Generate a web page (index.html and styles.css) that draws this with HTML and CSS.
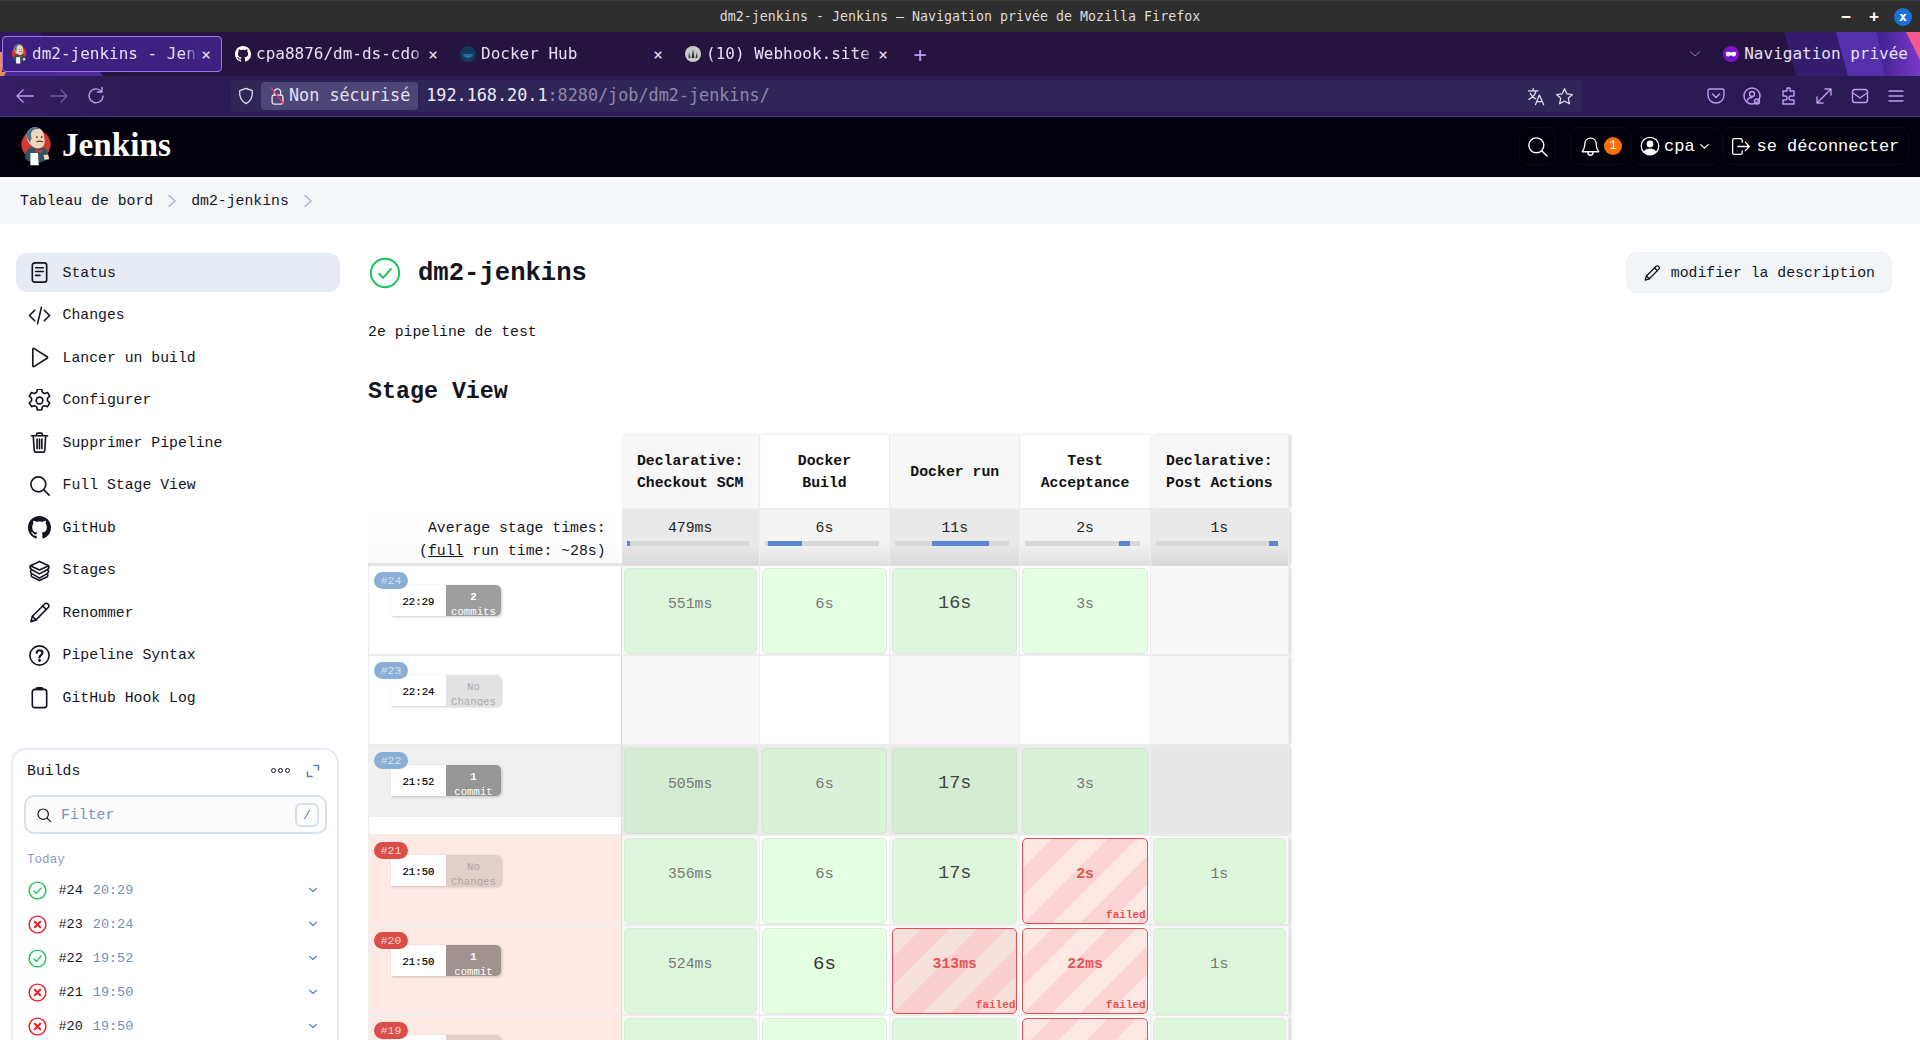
FILE: index.html
```html
<!DOCTYPE html>
<html lang="fr">
<head>
    <meta charset="UTF-8">
    <title>dm2-jenkins - Jenkins</title>
    <link rel="stylesheet" href="styles.css">
</head>
<body>

    <svg class="defs" width="0" height="0">
        <symbol id="i-github" viewBox="0 0 16 16"><path fill="currentColor" stroke="none" d="M8 0C3.58 0 0 3.58 0 8c0 3.54 2.29 6.53 5.47 7.59.4.07.55-.17.55-.38 0-.19-.01-.82-.01-1.49-2.01.37-2.53-.49-2.69-.94-.09-.23-.48-.94-.82-1.13-.28-.15-.68-.52-.01-.53.63-.01 1.08.58 1.23.82.72 1.21 1.87.87 2.33.66.07-.52.28-.87.51-1.07-1.78-.2-3.64-.89-3.64-3.95 0-.87.31-1.59.82-2.15-.08-.2-.36-1.02.08-2.12 0 0 .67-.21 2.2.82.64-.18 1.32-.27 2-.27.68 0 1.36.09 2 .27 1.53-1.04 2.2-.82 2.2-.82.44 1.1.16 1.92.08 2.12.51.56.82 1.27.82 2.15 0 3.07-1.87 3.75-3.65 3.95.29.25.54.73.54 1.48 0 1.07-.01 1.93-.01 2.2 0 .21.15.46.55.38A8.013 8.013 0 0016 8c0-4.42-3.58-8-8-8z"/></symbol>
        <symbol id="i-search" viewBox="0 0 24 24"><circle cx="10.8" cy="10.8" r="7.8"/><path d="M16.6 16.6 22 22"/></symbol>
        <symbol id="i-pencil" viewBox="0 0 24 24"><path d="M3 21.5l1.6-5.6L17.4 3.1a2.3 2.3 0 0 1 3.3 0l.4.4a2.3 2.3 0 0 1 0 3.3L8.4 19.7z"/><path d="M15.4 5.2l3.5 3.5M4.6 15.9l3.8 3.8"/></symbol>
        <symbol id="i-ok" viewBox="0 0 24 24"><circle cx="12" cy="12" r="10.6"/><path d="M7.6 12.6l3 3 5.8-6.6"/></symbol>
        <symbol id="i-ko" viewBox="0 0 24 24"><circle cx="12" cy="12" r="10.6"/><path d="M8.6 8.6l6.8 6.8M15.4 8.6l-6.8 6.8" stroke-width="2.6"/></symbol>
        <symbol id="i-chev" viewBox="0 0 24 24"><path d="M5 8.5l7 6.5 7-6.5"/></symbol>
        <symbol id="i-jenkins" viewBox="0 0 34 42">
            <circle cx="17" cy="19" r="15.5" fill="#d33833"/>
            <path d="M5 31c1-6 5-10 10-10l9 1c4 1 6 4 6 7l-1 5c-3 3-6 4-10 4l-9-1c-3-1-5-3-5-6z" fill="#335061"/>
            <path d="M7 8c1-5 5-7.500 9-7.500 6 0 9 4 9.500 9 .4 3 1 5 .5 8-.5 3-3 5-6 5.500-3 .4-6-1-8-3-3-3-6-7-5-12z" fill="#f0d6b7"/>
            <path d="M7 8c1-5 5-7.500 9-7.500 3 0 5 1 6.500 2.500-4-1-8-.5-10 2-1 2-1 5 0 8-2 1-2 3-.5 5-3-3-6-7-5-10z" fill="#49728b"/>
            <path d="M16 24l4 1.500 4-1.500-.5 4-3.500-1-3.500 1z" fill="#d33833"/>
            <path d="M11 28l8 0 1 13-9 0z" fill="#fff"/>
            <path d="M25 30l5-.5 1 5-5 .5z" fill="#f0d6b7"/>
            <path d="M18 16c1.500-.8 4-.8 6 0" fill="none" stroke="#49443f" stroke-width="1.200"/>
            <circle cx="18" cy="11" r="1" fill="#333"/><circle cx="23" cy="11" r="1" fill="#333"/>
        </symbol>
    </svg>

    <div class="titlebar">
        <span>dm2-jenkins - Jenkins — Navigation privée de Mozilla Firefox</span>
        <div class="win-buttons">
            <span class="win-btn">−</span>
            <span class="win-btn">+</span>
            <span class="win-close">x</span>
        </div>
    </div>

    <div class="firefox">
        <svg class="theme-art art-left" width="110" height="44" viewBox="0 0 110 44">
            <path d="M0 0h40l26 40H0z" fill="#2f1c60"/>
            <path d="M0 40h100l3 4H0z" fill="#4a2a96"/>
            <path d="M0 20h2v20H0zM0 40h6l-2 4H0z" fill="#f08a5d"/>
        </svg>
        <svg class="theme-art art-right" width="140" height="44" viewBox="0 0 140 44">
            <defs>
                <linearGradient id="art-fade" x1="0" x2="1" y1="0" y2="0">
                    <stop offset="0" stop-color="#3d2290"/>
                    <stop offset="1" stop-color="#7a38c8"/>
                </linearGradient>
            </defs>
            <path d="M4 0L16 44H140V0z" fill="#331c6e"/>
            <path d="M97 0L105 44H140V0z" fill="url(#art-fade)"/>
            <path d="M56 0L68 44H105L97 0z" fill="#5530ad"/>
            <path d="M126 0H140V28z" fill="#f4588e"/>
        </svg>

        <div class="tabs">
            <div class="tab active">
                <svg class="favicon"><use href="#i-jenkins"/></svg>
                <span class="tab-title">dm2-jenkins - Jenkins</span>
                <span class="tab-close">×</span>
            </div>
            <div class="tab">
                <svg class="favicon white"><use href="#i-github"/></svg>
                <span class="tab-title">cpa8876/dm-ds-cdo</span>
                <span class="tab-close">×</span>
            </div>
            <div class="tab">
                <svg class="favicon" viewBox="0 0 16 16"><circle cx="8" cy="8" r="8" fill="#123a5c"/><path d="M3 8h8.500c1 0 1.500-1 2-1-.5 3-3 5-6 5-2.500 0-4-1.500-4.500-4z" fill="#2a6d9e"/></svg>
                <span class="tab-title">Docker Hub</span>
                <span class="tab-close">×</span>
            </div>
            <div class="tab">
                <svg class="favicon" viewBox="0 0 16 16"><circle cx="8" cy="8" r="8" fill="#c9c9c9"/><path d="M8 3l1.500 9H6.500zM4 6l1.500 6H3.500zM12 6l.5 6h-2z" fill="#333"/></svg>
                <span class="tab-title">(10) Webhook.site</span>
                <span class="tab-close">×</span>
            </div>
            <span class="new-tab">+</span>
            <svg class="tabs-chev"><use href="#i-chev"/></svg>
            <svg class="mask" viewBox="0 0 16 16"><circle cx="8" cy="8" r="8" fill="#7a12c9"/><path d="M2.800 6.500c1.500-1 3.500-1 5.200 0 1.700-1 3.700-1 5.200 0 .2 2.500-1 4-2.600 4-1.200 0-2-1.200-2.600-1.200s-1.400 1.200-2.600 1.200c-1.600 0-2.800-1.500-2.600-4z" fill="#fff"/></svg>
            <span class="private">Navigation privée</span>
        </div>

        <div class="toolbar">
            <div class="tb-btn"><svg><path d="M19 10H3M9 4l-6 6 6 6"/></svg></div>
            <div class="tb-btn dim"><svg><path d="M1 10h16M11 4l6 6-6 6"/></svg></div>
            <div class="tb-btn"><svg><path d="M15.500 5.500A7 7 0 1 0 17 10M16 1.500v4.500h-4.500"/></svg></div>
            <div class="urlbar">
                <svg class="shield" viewBox="0 0 20 20"><path d="M10 1.500l7 2.500c.5 6-1 11.500-7 14.500C4 15.500 2.500 10 3 4z"/></svg>
                <div class="insecure">
                    <svg class="lock" viewBox="0 0 18 20"><rect x="3" y="9" width="12" height="10" rx="2"/><path d="M5.500 9V5.500a3.500 3.500 0 0 1 7 0V9"/><path class="slash" d="M2 1l14 18"/></svg>
                    <span class="insecure-text">Non sécurisé</span>
                </div>
                <span class="url">192.168.20.1<span class="url-dim">:8280/job/dm2-jenkins/</span></span>
                <svg class="url-icon" viewBox="0 0 20 20"><path d="M1.500 4h10M6.500 1.500V4M9.500 4c-.8 4-3.500 7-7.500 9M3.500 6.500c1 3 3 5 5.500 6M9 18.500l4-10 4.500 10M10.500 15.500h5.500"/></svg>
                <svg class="url-icon" viewBox="0 0 20 20"><path d="M10 1.800l2.500 5.400 5.800.7-4.300 4 1.200 5.800-5.200-3-5.200 3 1.200-5.800-4.300-4 5.800-.7z"/></svg>
            </div>
            <div class="toolbar-right">
                <div class="tb-btn"><svg><path d="M3.500 3h13c.8 0 1.500.7 1.500 1.500V9c0 4.500-3.500 8-8 8s-8-3.500-8-8V4.500C2 3.700 2.700 3 3.500 3zM6.500 8l3.500 3.500L13.500 8"/></svg></div>
                <div class="tb-btn"><svg><circle cx="10" cy="10" r="8"/><circle cx="10" cy="8" r="2.500"/><path d="M5 15c1-3 3-3.500 5-3.500"/><circle cx="15" cy="15.500" r="2.500"/></svg></div>
                <div class="tb-btn"><svg><path d="M9 2h3v3h4v5h-3a2 2 0 0 0 0 4h3v4H5v-4h2a2 2 0 0 0 0-4H5V5h4z"/></svg></div>
                <div class="tb-btn"><svg><path d="M3 17L17 3M11 3h6v6M3 11v6h6"/></svg></div>
                <div class="tb-btn"><svg><rect x="2.500" y="3.500" width="15" height="13" rx="2.500"/><path d="M3 7l7 5 7-5"/></svg></div>
                <div class="tb-btn"><svg><path d="M3 5h14M3 10h14M3 15h14"/></svg></div>
            </div>
        </div>
    </div>

    <div class="header">
        <a class="logo" href="#">
            <svg class="logo-mark"><use href="#i-jenkins"/></svg>
            <span class="logo-text">Jenkins</span>
        </a>
        <div class="header-actions">
            <a class="head-btn btn-search" href="#"><svg class="icon"><use href="#i-search"/></svg></a>
            <a class="head-btn btn-bell" href="#">
                <svg class="icon" viewBox="0 0 24 24"><path d="M12 2.500c-4 0-6.500 3-6.500 7 0 4.500-1 6-3 8.500h19c-2-2.500-3-4-3-8.500 0-4-2.500-7-6.500-7zM9 18.500c0 2 1.300 3.500 3 3.500s3-1.500 3-3.500"/></svg>
                <span class="badge">1</span>
            </a>
            <a class="head-btn btn-user" href="#">
                <svg class="icon" viewBox="0 0 24 24"><circle cx="12" cy="12" r="10.500"/><circle cx="12" cy="9.500" r="4" class="solid"/><path d="M4.500 19c1.500-3 4.500-4 7.500-4s6 1 7.500 4c-2 2-4.500 3.500-7.500 3.500S6.500 21 4.500 19z" class="solid"/></svg>
                <span>cpa</span>
                <svg class="head-chev"><use href="#i-chev"/></svg>
            </a>
            <a class="head-btn btn-logout" href="#">
                <svg class="icon" viewBox="0 0 24 24"><path d="M12 3H5c-1 0-2 1-2 2v14c0 1 1 2 2 2h7c1 0 2-1 2-2v-2M14 7V5c0-1-1-2-2-2M9 12h13M17.500 7l4.500 5-4.500 5"/></svg>
                <span>se déconnecter</span>
            </a>
        </div>
    </div>

    <div class="breadcrumbs">
        <a href="#">Tableau de bord</a>
        <svg class="crumb-sep" viewBox="0 0 10 14"><path d="M2 1.500l6 5.500-6 5.500"/></svg>
        <a href="#">dm2-jenkins</a>
        <svg class="crumb-sep" viewBox="0 0 10 14"><path d="M2 1.500l6 5.500-6 5.500"/></svg>
    </div>

    <div class="page">
        <div class="sidebar">
            <div class="side-nav">
                <a class="side-item current" href="#">
                    <svg class="side-icon" viewBox="0 0 24 24"><rect x="4.500" y="2" width="15" height="20" rx="2.500"/><path d="M8 7h8M8 11h8M8 15h4.500"/></svg>
                    Status
                </a>
                <a class="side-item" href="#">
                    <svg class="side-icon" viewBox="0 0 24 24"><path d="M7 6.500L1.500 12 7 17.500M17 6.500l5.500 5.500-5.500 5.500M14 3.500l-4 17"/></svg>
                    Changes
                </a>
                <a class="side-item" href="#">
                    <svg class="side-icon" viewBox="0 0 24 24"><path d="M5 3.500v17c0 .8.800 1.200 1.500.8L20 12.800c.6-.4.600-1.200 0-1.600L6.500 2.700C5.800 2.300 5 2.700 5 3.500z"/></svg>
                    Lancer un build
                </a>
                <a class="side-item" href="#">
                    <svg class="side-icon" viewBox="0 0 24 24"><g transform="translate(12 12) scale(1.250) translate(-12 -12)" stroke-width="1.360"><path d="M10.200 2.500h3.600l.6 2.600 1.800 1 2.500-.8 1.800 3.100-1.900 1.800v2l1.900 1.800-1.800 3.100-2.500-.8-1.800 1-.6 2.600h-3.600l-.6-2.600-1.800-1-2.500.8-1.800-3.100 1.900-1.800v-2L3.500 8.400l1.800-3.100 2.500.8 1.800-1z"/><circle cx="12" cy="12" r="2.800"/></g></svg>
                    Configurer
                </a>
                <a class="side-item" href="#">
                    <svg class="side-icon" viewBox="0 0 24 24"><path d="M3.500 5h17M9 5V3.500c0-.8.500-1.300 1.300-1.300h3.400c.8 0 1.300.5 1.300 1.300V5M5.500 5l1 15.500c.1 1 .8 1.500 1.700 1.500h7.600c.9 0 1.600-.5 1.700-1.500L18.500 5M9.500 8.500v10M12 8.500v10M14.500 8.500v10"/></svg>
                    Supprimer Pipeline
                </a>
                <a class="side-item" href="#">
                    <svg class="side-icon"><use href="#i-search"/></svg>
                    Full Stage View
                </a>
                <a class="side-item" href="#">
                    <svg class="side-icon"><use href="#i-github"/></svg>
                    GitHub
                </a>
                <a class="side-item" href="#">
                    <svg class="side-icon" viewBox="0 0 24 24" stroke-width="1.500"><path d="M12 2.500L21.500 7 12 11.500 2.500 7zM2.500 7c-.8 2 .2 3.500 1.500 4.200L12 15.500l8-4.300c1.300-.7 2.300-2.200 1.500-4.200M3.500 11c-1.500 1.800-.8 3.500.5 4.300L12 20l8-4.700c1.300-.8 2-2.500.5-4.300M4 15.500c-1.200 1.500-.6 2.700.5 3.300L12 22.500l7.500-3.700c1.100-.6 1.700-1.800.5-3.300"/></svg>
                    Stages
                </a>
                <a class="side-item" href="#">
                    <svg class="side-icon"><use href="#i-pencil"/></svg>
                    Renommer
                </a>
                <a class="side-item" href="#">
                    <svg class="side-icon" viewBox="0 0 24 24"><circle cx="12" cy="12" r="10"/><path d="M9 9.200c.3-1.700 1.500-2.700 3.100-2.700 1.700 0 3 1.100 3 2.700 0 2.300-3.100 2.600-3.100 5" stroke-width="2.200"/><circle cx="12" cy="17.300" r=".7"/></svg>
                    Pipeline Syntax
                </a>
                <a class="side-item" href="#">
                    <svg class="side-icon" viewBox="0 0 24 24"><rect x="4.500" y="3.500" width="15" height="19" rx="2.500"/><path d="M8.500 3.500c0-1 .5-1.500 1.500-1.500h4c1 0 1.500.5 1.500 1.500z"/></svg>
                    GitHub Hook Log
                </a>
            </div>

            <div class="builds">
                <div class="builds-head">
                    <span>Builds</span>
                    <span class="dots"><i></i><i></i><i></i></span>
                    <svg class="expand" viewBox="0 0 14 14"><path d="M8 1.500h4.500V6M6 12.500H1.500V8"/></svg>
                </div>
                <div class="filter">
                    <svg class="filter-icon"><use href="#i-search"/></svg>
                    <span class="filter-text">Filter</span>
                    <span class="slash">/</span>
                </div>
                <div class="builds-day">Today</div>
                <div class="build"><svg class="b-icon ok"><use href="#i-ok"/></svg><span class="b-num">#24</span><span class="b-time">20:29</span><svg class="b-chev"><use href="#i-chev"/></svg></div>
                <div class="build"><svg class="b-icon ko"><use href="#i-ko"/></svg><span class="b-num">#23</span><span class="b-time">20:24</span><svg class="b-chev"><use href="#i-chev"/></svg></div>
                <div class="build"><svg class="b-icon ok"><use href="#i-ok"/></svg><span class="b-num">#22</span><span class="b-time">19:52</span><svg class="b-chev"><use href="#i-chev"/></svg></div>
                <div class="build"><svg class="b-icon ko"><use href="#i-ko"/></svg><span class="b-num">#21</span><span class="b-time">19:50</span><svg class="b-chev"><use href="#i-chev"/></svg></div>
                <div class="build"><svg class="b-icon ko"><use href="#i-ko"/></svg><span class="b-num">#20</span><span class="b-time">19:50</span><svg class="b-chev"><use href="#i-chev"/></svg></div>
            </div>
        </div>

        <div class="main">
            <div class="job-head">
                <svg class="job-status"><use href="#i-ok"/></svg>
                <h1>dm2-jenkins</h1>
                <a class="edit-desc" href="#"><svg class="edit-icon"><use href="#i-pencil"/></svg>modifier la description</a>
            </div>
            <p class="job-desc">2e pipeline de test</p>
            <h2>Stage View</h2>

            <table class="stages">
                <colgroup><col class="c-head"><col class="c-wide"><col class="c-mid"><col class="c-mid"><col class="c-mid"><col class="c-wide"></colgroup>
                <tr class="names">
                    <th class="blank"></th>
                    <th>Declarative: Checkout SCM</th>
                    <th>Docker<br>Build</th>
                    <th>Docker run</th>
                    <th>Test<br>Acceptance</th>
                    <th>Declarative: Post Actions</th>
                </tr>
                <tr class="averages">
                    <td class="avg-label">Average stage times:<br>(<u>full</u> run time: ~28s)</td>
                    <td><div class="avg-time">479ms</div><div class="bar"><i style="margin-left:0;width:3px"></i></div></td>
                    <td><div class="avg-time">6s</div><div class="bar"><i style="margin-left:3px;width:34px"></i></div></td>
                    <td><div class="avg-time">11s</div><div class="bar"><i style="margin-left:37px;width:57px"></i></div></td>
                    <td><div class="avg-time">2s</div><div class="bar"><i style="margin-left:94px;width:11px"></i></div></td>
                    <td><div class="avg-time">1s</div><div class="bar"><i style="margin-left:113px;width:10px"></i></div></td>
                </tr>
                <tr class="run">
                    <td class="run-head"><span class="run-id">#24</span><div class="run-chip"><span class="run-time">22:29</span><span class="changes"><b>2</b><br>commits</span></div></td>
                    <td><div class="stage"><span class="t-sm">551ms</span></div></td>
                    <td><div class="stage"><span class="t-md">6s</span></div></td>
                    <td><div class="stage"><span class="t-lg">16s</span></div></td>
                    <td><div class="stage"><span class="t-sm">3s</span></div></td>
                    <td></td>
                </tr>
                <tr class="run">
                    <td class="run-head"><span class="run-id">#23</span><div class="run-chip"><span class="run-time">22:24</span><span class="changes none">No<br>Changes</span></div></td>
                    <td></td><td></td><td></td><td></td><td></td>
                </tr>
                <tr class="run hovered">
                    <td class="run-head"><div class="run-hover"><span class="run-id">#22</span><div class="run-chip"><span class="run-time">21:52</span><span class="changes"><b>1</b><br>commit</span></div></div></td>
                    <td><div class="stage"><span class="t-sm">505ms</span></div></td>
                    <td><div class="stage"><span class="t-md">6s</span></div></td>
                    <td><div class="stage"><span class="t-lg">17s</span></div></td>
                    <td><div class="stage"><span class="t-sm">3s</span></div></td>
                    <td></td>
                </tr>
                <tr class="run failed">
                    <td class="run-head"><span class="run-id">#21</span><div class="run-chip"><span class="run-time">21:50</span><span class="changes none">No<br>Changes</span></div></td>
                    <td><div class="stage"><span class="t-sm">356ms</span></div></td>
                    <td><div class="stage"><span class="t-md">6s</span></div></td>
                    <td><div class="stage"><span class="t-lg">17s</span></div></td>
                    <td><div class="stage fail"><span class="t-sm">2s</span><span class="fail-tag">failed</span></div></td>
                    <td><div class="stage"><span class="t-sm">1s</span></div></td>
                </tr>
                <tr class="run failed">
                    <td class="run-head"><span class="run-id">#20</span><div class="run-chip"><span class="run-time">21:50</span><span class="changes"><b>1</b><br>commit</span></div></td>
                    <td><div class="stage"><span class="t-sm">524ms</span></div></td>
                    <td><div class="stage"><span class="t-xl">6s</span></div></td>
                    <td><div class="stage fail"><span class="t-sm">313ms</span><span class="fail-tag">failed</span></div></td>
                    <td><div class="stage fail"><span class="t-sm">22ms</span><span class="fail-tag">failed</span></div></td>
                    <td><div class="stage"><span class="t-md">1s</span></div></td>
                </tr>
                <tr class="run failed">
                    <td class="run-head"><span class="run-id">#19</span><div class="run-chip"><span class="run-time"></span><span class="changes none"></span></div></td>
                    <td><div class="stage"></div></td>
                    <td><div class="stage"></div></td>
                    <td><div class="stage"></div></td>
                    <td><div class="stage fail"></div></td>
                    <td><div class="stage"></div></td>
                </tr>
            </table>
        </div>
    </div>

</body>
</html>
```

FILE: styles.css
```css
* {
    box-sizing: border-box;
}
html, body {
    height: 1040px;
    overflow: hidden;
}
body {
    margin: 0;
    font-family: "Liberation Mono", monospace;
    font-size: 14.8px;
    color: #14141f;
    background-color: #fff;
}
a {
    color: inherit;
    text-decoration: none;
}
.defs {
    position: absolute;
}
svg {
    fill: none;
    stroke: currentColor;
    stroke-linecap: round;
    stroke-linejoin: round;
}

/* window title */
.titlebar {
    height: 32px;
    display: flex;
    align-items: center;
    justify-content: center;
    position: relative;
    background-color: #2e2e2e;
    border-top: 1px solid #3c3c3c;
    color: #dcdcdc;
    font-family: "DejaVu Sans Mono", monospace;
    font-size: 13.3px;
}
.win-buttons {
    position: absolute;
    right: 8px;
    top: 6px;
    display: flex;
    align-items: center;
    gap: 12px;
}
.win-btn {
    width: 16px;
    text-align: center;
    color: #fff;
    font-size: 16px;
    font-weight: bold;
}
.win-close {
    width: 18px;
    height: 18px;
    border-radius: 50%;
    background-color: #1c71d8;
    color: #fff;
    text-align: center;
    font-weight: bold;
    font-size: 13px;
    line-height: 17px;
}

/* firefox chrome */
.firefox {
    position: relative;
    height: 85px;
    background-color: #24143f;
    border-bottom: 1px solid #49389a;
    color: #fbfbfe;
    font-family: "DejaVu Sans Mono", monospace;
    overflow: hidden;
}
.theme-art {
    position: absolute;
    top: 0;
    stroke: none;
}
.art-left {
    left: 0;
}
.art-right {
    right: 0;
}
.tabs {
    position: relative;
    height: 44px;
    display: flex;
    align-items: center;
    font-size: 16px;
}
.tab {
    width: 225px;
    height: 36px;
    padding: 0 12px 0 8px;
    display: flex;
    align-items: center;
    flex: none;
    border-radius: 4px;
    color: #e6e1f5;
}
.tab.active {
    width: 220px;
    margin: 0 5px 0 2px;
    padding: 0 8px 0 8px;
    background-color: #3c2180;
    border: 1px solid #9a74e8;
}
.favicon {
    width: 16px;
    height: 20px;
    flex: none;
    stroke: none;
    margin-right: 5px;
}
.favicon.white {
    color: #fff;
    fill: #fff;
}
.tab-title {
    flex: 1;
    margin-top: -2px;
    white-space: nowrap;
    overflow: hidden;
    -webkit-mask-image: linear-gradient(to left, transparent 0, #000 14px);
    mask-image: linear-gradient(to left, transparent 0, #000 14px);
}
.tab-close {
    width: 14px;
    flex: none;
    text-align: center;
    font-size: 16px;
}
.new-tab {
    margin-left: 7px;
    width: 22px;
    text-align: center;
    color: #b598f0;
    font-size: 22px;
    font-weight: 200;
}
.tabs-chev {
    width: 16px;
    height: 16px;
    margin-left: auto;
    color: #b9a5ec;
}
.mask {
    width: 16px;
    height: 16px;
    margin-left: 20px;
    stroke: none;
}
.private {
    margin: -2px 12px 0 5px;
    color: #e6e1f5;
}
.toolbar {
    position: relative;
    height: 40px;
    padding-left: 6px;
    display: flex;
    align-items: center;
    background: linear-gradient(to right, #351f66, #2b1b54 130px);
}
.tb-btn {
    width: 36px;
    height: 32px;
    flex: none;
    display: flex;
    align-items: center;
    justify-content: center;
    color: #bd9cf2;
}
.tb-btn svg {
    width: 20px;
    height: 20px;
    stroke-width: 1.4;
}
.tb-btn.dim {
    opacity: .5;
}
.urlbar {
    width: 1351px;
    height: 32px;
    margin-left: 117px;
    padding: 0 8px 0 6px;
    display: flex;
    align-items: center;
    background-color: #2f2657;
    border-radius: 4px;
    font-size: 16.8px;
}
.shield {
    width: 18px;
    height: 20px;
    flex: none;
    stroke-width: 1.4;
    color: #e6e1f5;
}
.insecure {
    height: 28px;
    margin-left: 6px;
    padding: 0 8px 0 8px;
    display: flex;
    align-items: center;
    gap: 3px;
    background-color: #4e4676;
    border-radius: 4px;
    color: #e6e1f5;
}
.insecure-text {
    margin-top: -3px;
}
.lock {
    width: 17px;
    height: 18px;
    stroke-width: 1.5;
}
.lock .slash {
    stroke: #e8365d;
}
.url {
    margin: -3px 0 0 8px;
    color: #eceaf5;
}
.url-dim {
    color: #8f88ad;
}
.url-icon {
    width: 19px;
    height: 19px;
    flex: none;
    margin-left: 9px;
    stroke-width: 1.3;
    color: #e6e1f5;
}
.url + .url-icon {
    margin-left: auto;
}
.toolbar-right {
    margin-left: auto;
    margin-right: 6px;
    display: flex;
}

/* jenkins header */
.header {
    height: 60px;
    padding: 0 11.5px 2px 20px;
    display: flex;
    align-items: center;
    justify-content: space-between;
    background-color: #01000a;
    color: #fff;
}
.logo {
    display: flex;
    align-items: center;
    gap: 10px;
}
.logo-mark {
    width: 32px;
    height: 41px;
    stroke: none;
}
.logo-text {
    margin-top: -2px;
    font-family: "Liberation Serif", serif;
    font-size: 33.2px;
    font-weight: bold;
}
.header-actions {
    display: flex;
    align-items: center;
    font-size: 17px;
}
.head-btn {
    height: 38px;
    display: flex;
    align-items: center;
    border: 1px solid #0a0a14;
    border-radius: 10px;
}
.icon {
    width: 23px;
    height: 23px;
    flex: none;
    stroke-width: 1.5;
}
.btn-search {
    width: 37px;
    justify-content: center;
    margin-right: 14px;
}
.btn-bell {
    width: 60px;
    padding-left: 9px;
    gap: 3px;
}
.btn-bell .icon {
    width: 21px;
}
.badge {
    width: 18px;
    height: 18px;
    border-radius: 50%;
    background-color: #ff6d00;
    color: #fff;
    font-size: 12px;
    text-align: center;
    line-height: 18px;
}
.btn-user {
    width: 90.5px;
    margin-left: 1px;
    padding-left: 8px;
    gap: 4px;
}
.btn-user .icon {
    width: 20px;
    height: 20px;
}
.solid {
    fill: currentColor;
    stroke: none;
}
.head-chev {
    width: 13px;
    height: 13px;
    stroke-width: 2.4;
    margin-left: -1px;
}
.btn-logout {
    width: 186px;
    margin-left: 1px;
    padding-left: 6px;
    gap: 6px;
}
.btn-logout .icon {
    width: 21px;
}

/* breadcrumbs */
.breadcrumbs {
    height: 47px;
    padding: 0 20px;
    display: flex;
    align-items: center;
    background-color: #f5f6f8;
}
.crumb-sep {
    width: 10px;
    height: 14px;
    margin: 0 14px 0 14px;
    color: #a9b7d6;
    stroke-width: 1.6;
}

/* page columns */
.page {
    display: flex;
}
.sidebar {
    width: 368px;
    flex: none;
    padding: 29px 29px 0 11px;
}
.side-nav {
    margin: 0 -1px 31px 5px;
    display: flex;
    flex-direction: column;
    gap: 3.5px;
}
.side-item {
    height: 39px;
    padding-left: 12px;
    display: flex;
    align-items: center;
    gap: 11.5px;
    border-radius: 11px;
}
.side-item.current {
    background-color: #e7ebf4;
}
.side-icon {
    width: 23px;
    height: 23px;
    flex: none;
    stroke-width: 1.7;
}

/* build history */
.builds {
    height: 400px;
    padding: 0 13px 0 14px;
    border: 2px solid #e8edf5;
    border-radius: 15px;
}
.builds-head {
    height: 41px;
    padding-right: 4px;
    display: flex;
    align-items: center;
}
.dots {
    margin-left: auto;
    display: flex;
    gap: 2px;
}
.dots i {
    width: 5px;
    height: 5px;
    border: 1.300px solid #14141f;
    border-radius: 50%;
}
.expand {
    width: 14px;
    height: 14px;
    margin-left: 16px;
    color: #5f7fb5;
    stroke-width: 1.5;
}
.filter {
    height: 39px;
    margin: 4px -3px 0 -3px;
    padding: 0 6px 0 10px;
    display: flex;
    align-items: center;
    background-color: #fcfcfd;
    border: 2px solid #d8e0ec;
    border-radius: 10px;
}
.filter-icon {
    width: 16px;
    height: 16px;
    stroke-width: 1.800;
}
.filter-text {
    margin-left: 9px;
    color: #7a8fb8;
}
.slash {
    width: 24px;
    height: 24px;
    margin-left: auto;
    text-align: center;
    line-height: 21px;
    border: 2px solid #d8e0ec;
    border-radius: 6px;
    color: #5f7fb5;
    font-size: 13px;
}
.builds-day {
    margin-top: 19px;
    margin-bottom: 6px;
    color: #8a9cc4;
    font-size: 12.6px;
}
.build {
    height: 34px;
    display: flex;
    align-items: center;
    font-size: 13.500px;
}
.b-icon {
    width: 19px;
    height: 19px;
    flex: none;
    margin-left: 1px;
    stroke-width: 1.800;
}
.b-icon.ok {
    color: #1cc45c;
}
.b-icon.ko {
    color: #ee1c25;
}
.b-num {
    margin-left: 11.5px;
}
.b-time {
    margin-left: 10px;
    color: #6f8fc0;
}
.b-chev {
    width: 12px;
    height: 12px;
    margin-left: auto;
    margin-right: 5px;
    color: #5f7fb5;
    stroke-width: 2.200;
}

/* job title */
.main {
    flex: 1;
    padding: 29px 29px 0 0;
}
.job-head {
    height: 39px;
    display: flex;
    align-items: center;
}
.job-status {
    width: 32px;
    height: 32px;
    margin-left: 1px;
    color: #1cc45c;
    stroke-width: 1.500;
}
h1 {
    margin: 2px 0 0 17px;
    font-size: 25.6px;
}
.edit-desc {
    height: 39px;
    margin-left: auto;
    padding: 0 16px 0 16px;
    display: flex;
    align-items: center;
    gap: 10px;
    background-color: #f2f5f8;
    border-radius: 10px;
    box-shadow: 0 0 0 1px #eef1f5;
}
.edit-icon {
    width: 18px;
    height: 18px;
    stroke-width: 1.800;
}
.job-desc {
    margin: 31px 0 0 0;
    line-height: 18px;
}
h2 {
    margin: 37px 0 0 0;
    font-size: 23.3px;
    line-height: 28px;
}

/* stage view */
.stages {
    margin-top: 29px;
    table-layout: fixed;
    width: 921px;
    border-collapse: separate;
    border-spacing: 0;
}
.c-head {
    width: 253px;
}
.c-wide {
    width: 138px;
}
.c-mid {
    width: 130px;
}
.stages td, .stages th {
    padding: 0;
    border-right: 1px solid #eee;
    border-bottom: 2px solid #ededed;
    vertical-align: top;
}
.stages td:nth-child(even), .stages th:nth-child(even) {
    background-color: #f7f7f7;
}
.stages tr > td:first-child {
    border-right-color: #dcdcdc;
}
.stages tr > :last-child {
    box-shadow: 3px 0 3px -1px rgba(0, 0, 0, .16);
}
.names th {
    height: 75px;
    padding: 0 8px;
    vertical-align: middle;
    font-size: 14.8px;
    line-height: 22px;
    color: #111;
    box-shadow: 0 -2px 3px -1px rgba(0, 0, 0, .08);
}
.stages .names th:last-child {
    box-shadow: 3px -1px 3px -1px rgba(0, 0, 0, .16);
}
.stages .names .blank {
    border: none;
    background: none;
    box-shadow: none;
}
.averages td {
    height: 55px;
    text-align: center;
    background: linear-gradient(#f3f3f3 60%, #dedede);
    border-bottom: 1px solid #e2e2e2;
}
.stages .averages td:nth-child(even) {
    background: linear-gradient(#e9e9e9 60%, #d9d9d9);
}
.stages .averages .avg-label {
    padding: 7px 16px 0 0;
    text-align: right;
    line-height: 23px;
    background: linear-gradient(#fff, #fbfbfb);
    border-bottom: 3px solid #e4e4e4;
    border-right: none;
}
.avg-time {
    margin-top: 9px;
    line-height: 18px;
    color: #222;
}
.bar {
    height: 5px;
    margin: 4px 10px 0 5px;
    display: flex;
    background-color: #d8d8d8;
}
.bar i {
    height: 5px;
    background-color: #5b86d2;
}
.run td {
    height: 89.800px;
    background-color: #fff;
}
.stages .run-head {
    padding: 6px 0 0 5px;
    border-left: 1px solid #eee;
}
.run-id {
    display: block;
    position: relative;
    z-index: 1;
    width: 34px;
    height: 17px;
    border-radius: 9px;
    background-color: #8aaed6;
    color: #d4e2f1;
    text-align: center;
    font-size: 11.500px;
    line-height: 17px;
}
.run-chip {
    display: flex;
    width: 110px;
    height: 31px;
    margin: -4px 0 0 17px;
    box-shadow: 1px 1px 3px rgba(0, 0, 0, .2);
    border-radius: 0 5px 5px 0;
}
.run-time {
    width: 55px;
    background-color: #fff;
    text-align: center;
    font-size: 10.700px;
    line-height: 34px;
    color: #000;
    -webkit-text-stroke: .2px #000;
}
.changes {
    width: 55px;
    overflow: hidden;
    padding-top: 5px;
    background-color: #9e9e9e;
    border-radius: 0 5px 5px 0;
    color: #fff;
    text-align: center;
    font-size: 10.700px;
    line-height: 15px;
}
.changes.none {
    background-color: #e2e2e2;
    color: #aaa;
}
.stage {
    position: relative;
    height: 86px;
    margin: 2px 2px 0 2px;
    padding-top: 26px;
    text-align: center;
    line-height: 18px;
    background-color: #e5ffe3;
    border: 1px solid #d9ecd8;
    border-radius: 5px;
    color: #777;
}
.stages td:nth-child(even) .stage {
    background-color: #def7dc;
}
.t-sm {
    font-size: 14.800px;
}
.t-md {
    font-size: 15.500px;
}
.t-lg {
    font-size: 18.500px;
    color: #444;
}
.t-xl {
    font-size: 19px;
    color: #333;
}

/* failed runs */
.failed .run-head, .stages .failed td:first-child {
    background-color: #ffe9e4;
}
.failed .run-id {
    background-color: #db4d48;
    color: #f8d8d4;
}
.failed .changes {
    background-color: #a0928e;
}
.failed .changes.none {
    background-color: #e2cfca;
    color: #b3a5a1;
}
.stages .stage.fail, .stages td:nth-child(even) .stage.fail {
    background: repeating-linear-gradient(135deg, #fde8e4 0, #fde8e4 20px, #fdd4d4 20px, #fdd4d4 40px);
    border: 1px solid #e05050;
    color: #e05555;
    font-weight: bold;
}
.stages td:nth-child(4) .stage.fail {
    background: repeating-linear-gradient(135deg, #f6e0dc 0, #f6e0dc 20px, #f9cfcf 20px, #f9cfcf 40px);
}
.fail-tag {
    position: absolute;
    right: 1px;
    bottom: 1px;
    font-size: 11px;
    line-height: 13px;
    color: #ee4f4f;
}

/* row under the pointer */
.stages .hovered td {
    background-color: #ececec;
}
.stages .hovered td:nth-child(even) {
    background-color: #e8e8e8;
}
.stages .hovered .run-head {
    padding: 0;
    background-color: #fff;
}
.run-hover {
    height: 71px;
    padding: 6px 0 0 5px;
    background-color: #f0f0f0;
}
.hovered .changes {
    background-color: #969696;
}
.stages .hovered .stage {
    background-color: #d9f2d8;
    border-color: #d0e4cf;
}
.stages .hovered td:nth-child(even) .stage, .stages .hovered td:nth-child(4) .stage {
    background-color: #d4ecd2;
}
.stages .hovered td:nth-child(6) .stage {
    background-color: #d9f2d8;
}
```
